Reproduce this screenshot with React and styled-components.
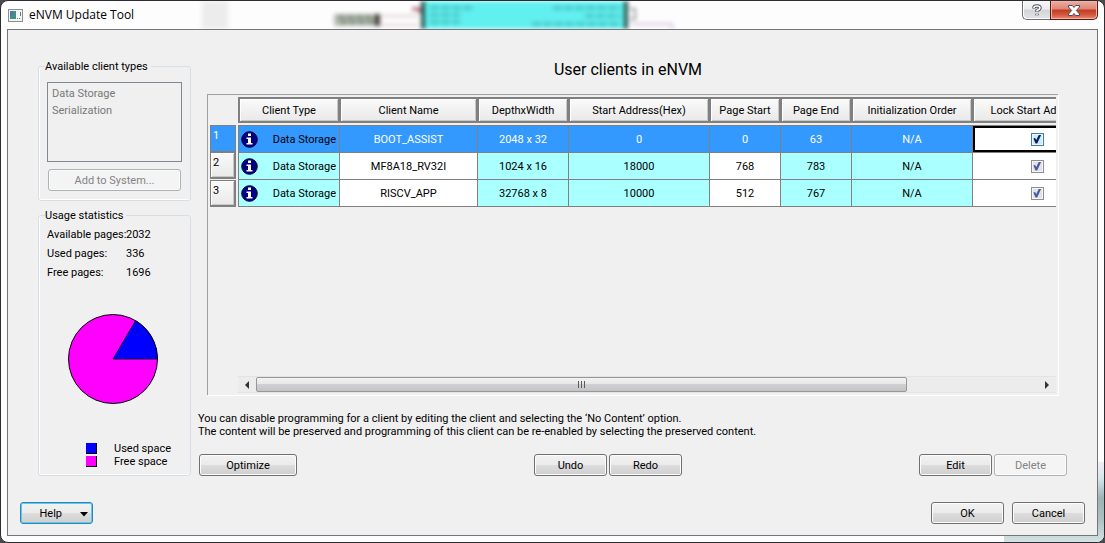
import React from "react";
import styled, { createGlobalStyle, css } from "styled-components";

const UI_FONT = 'Roboto, "Noto Sans", "Open Sans", sans-serif';
const CAPTION_FONT = '"Open Sans", "Noto Sans", sans-serif';

const GlobalStyle = createGlobalStyle`
  *, *::before, *::after { box-sizing: border-box; }
  body { margin: 0; background: #4a4a4e; font: 11px/14px ${UI_FONT}; color: #000; }
  button, input { font: inherit; color: inherit; }
`;

const Window = styled.div`
  position: relative;
  display: flex;
  flex-direction: column;
  min-height: 100vh;
  padding: 0 6px 6px;
  border: 1px solid #2c2c31;
  border-radius: 8px;
  background: #fdfdfe;
  overflow: hidden;
`;

const Backdrop = styled.svg`
  position: absolute;
  top: 0;
  left: -1px;
  filter: blur(2px);
`;

const Smudge = styled.div`
  position: absolute;
  right: 0;
  bottom: 0;
  width: 100px;
  height: 80px;
  border-radius: 0 0 7px 0;
  background: linear-gradient(#f3edf3, #d5e8ec 20%, #9db4b3 45%, #a9c0bf 70%, #d3e3e4);
`;

const TitleBar = styled.header`
  position: relative;
  display: flex;
  align-items: center;
  gap: 6px;
  height: 28px;
  padding-left: 1px;
`;

const Title = styled.h1`
  flex: 1;
  margin: 0;
  font: 400 12px/16px ${CAPTION_FONT};
`;

const CaptionButtons = styled.div`
  display: flex;
  align-self: flex-start;
  height: 19px;
`;

const CaptionButton = styled.button`
  display: flex;
  align-items: center;
  justify-content: center;
  width: 28px;
  padding: 0;
  border: 1px solid #6d6d74;
  border-top: 0;
  border-right: 0;
  border-radius: 0 0 0 5px;
  background: linear-gradient(#f8f8f9, #ececee 45%, #d3d4d8 50%, #e4e4e8);
  box-shadow: inset 1px -1px #fff;
  ${(p) => p.$close && css`
    width: 48px;
    border: 1px solid #5c1712;
    border-top: 0;
    border-radius: 0 0 5px 0;
    background: linear-gradient(#ecaea2, #dd8674 45%, #c3391f 50%, #d0563c 75%, #e58b70);
    box-shadow: inset 0 0 0 1px #f0b4a4;
  `}
`;

const Client = styled.main`
  position: relative;
  flex: 1;
  display: flex;
  flex-direction: column;
  border: 1px solid #75757a;
  background: #f0f0f0;
`;

const Content = styled.div`
  flex: 1;
  display: grid;
  grid-template-columns: 153px minmax(0, 1fr);
  gap: 8px;
  padding: 29px 30px 0;
`;

const Sidebar = styled.aside`
  display: flex;
  flex-direction: column;
  gap: 7px;
`;

const Group = styled.fieldset`
  display: flex;
  flex-direction: column;
  flex: ${(p) => (p.$grow ? "1" : "none")};
  min-width: 0;
  margin: 0;
  padding: ${(p) => (p.$grow ? "3px 8px 7px" : "9px 8px 9px")};
  border: 1px solid #d5dfe5;
  border-radius: 3px;
  box-shadow: inset 1px 0 #fff, inset 0 -1px #fff;
`;

const GroupTitle = styled.legend`
  margin: 0 -2px;
  padding: 2px 3px 0 0;
  line-height: 12px;
`;

const ClientTypes = styled.ul`
  height: 80px;
  margin: 0 0 7px;
  padding: 2px 4px;
  border: 1px solid #828790;
  list-style: none;
  color: #787878;
  line-height: 17px;
`;

const Button = styled.button`
  display: flex;
  align-items: center;
  justify-content: center;
  width: ${(p) => (p.$wide ? "98px" : "73px")};
  height: 22px;
  padding: 2px 0 0;
  border: 1px solid #707070;
  border-radius: 3px;
  background: linear-gradient(#f2f2f2, #ebebeb 49%, #dddddd 50%, #cfcfcf);
  box-shadow: inset 0 0 0 1px #fcfcfc;
  &:disabled {
    border-color: #adb2b5;
    background: #f4f4f4;
    color: #838383;
  }
`;

const AddButton = styled(Button)`
  width: auto;
  margin: 0 1px;
`;

const HelpButton = styled(Button)`
  justify-content: flex-end;
  gap: 18px;
  padding-right: 4px;
  border-color: #3c7fb1;
  box-shadow: inset 0 0 0 1px #4fd0f5;
`;

const Stats = styled.dl`
  display: grid;
  grid-template-columns: 79px 1fr;
  margin: 0;
  line-height: 19px;
  white-space: nowrap;
  dt, dd { margin: 0; }
`;

const Pie = styled.svg`
  display: block;
  margin: 31px auto 0 20px;
`;

const Legend = styled.ul`
  margin: auto 0 0;
  padding: 0 0 0 39px;
  list-style: none;
  line-height: 13px;
`;

const LegendItem = styled.li`
  display: flex;
  align-items: center;
  gap: 17px;
  &::before {
    content: "";
    width: 11px;
    height: 11px;
    border: solid #000;
    border-width: 0 1px 1px 0;
    background: ${(p) => p.$color};
  }
`;

const Panel = styled.section`
  display: flex;
  flex-direction: column;
`;

const Heading = styled.h2`
  margin: 0 10px 15px 0;
  padding-top: 2px;
  font-size: 16px;
  font-weight: 400;
  line-height: 18px;
  text-align: center;
`;

const Frame = styled.div`
  flex: 1;
  display: flex;
  flex-direction: column;
  justify-content: space-between;
  margin: 0 9px 0 8px;
  padding: 2px 2px 2px 2px;
  border: solid #a0a0a0;
  border-width: 1px 0 0 1px;
  box-shadow: 1px 1px #fff;
`;

const Viewport = styled.div`
  overflow: hidden;
`;

const Table = styled.table`
  width: 891px;
  table-layout: fixed;
  border-collapse: separate;
  border-spacing: 0;
  th, td { font-weight: 400; text-align: center; }
`;

const HeadCell = styled.th`
  padding: 0 0 2px;
`;

const raised = css`
  border: 1px solid #808080;
  border-right-width: 2px;
  border-bottom-width: 2px;
  background: linear-gradient(#fafafa, #e9e9e9);
  box-shadow: inset 1px 1px #fff, inset -1px -1px #c8c8c8;
`;

const HeadLabel = styled.div`
  height: 26px;
  line-height: 23px;
  white-space: nowrap;
  ${raised}
  border-width: 2px 1px 2px 2px;
`;

const RowHead = styled.th`
  padding: 0 2px 0 0;
  height: 27px;
`;

const RowLabel = styled.div`
  height: 27px;
  padding: 2px;
  line-height: 16px;
  text-align: left;
  ${raised}
  ${(p) => p.$selected && css`
    border: 1px solid #808080;
    background: #3399ff;
    box-shadow: none;
    color: #fff;
  `}
`;

const Cell = styled.td`
  height: 27px;
  padding: 2px 0 0;
  border: solid #808080;
  border-width: 1px 0 0 1px;
  background: ${(p) => (p.$selected ? "#3399ff" : p.$locked ? "#aaffff" : "#fff")};
  color: ${(p) => (p.$selected ? "#fff" : "#000")};
  tr:last-child > & { height: 28px; border-bottom-width: 1px; }
  ${(p) => p.$graphic && css`
    padding: 0;
  `}
  ${(p) => p.$focused && css`
    background: #fff;
    box-shadow: inset 0 0 0 2px #000;
  `}
`;

const TypeCell = styled.div`
  display: flex;
  align-items: center;
  justify-content: space-between;
  padding: 0 3px 0 2px;
  line-height: 16px;
  color: #000;
  span { padding-top: 1px; }
`;

const CheckBox = styled.input`
  appearance: none;
  display: block;
  width: 13px;
  height: 13px;
  margin: 0 auto;
  border: 1px solid ${(p) => (p.$hot ? "#3c7fb1" : "#8e8f8f")};
  background: ${(p) => (p.$hot ? "#c9ecfb" : "#dfe2e8")};
  box-shadow: inset 0 0 0 1px #f6f6f6;
  &:checked::before {
    content: "";
    display: block;
    width: 9px;
    height: 9px;
    margin: 1px;
    background: ${(p) => (p.$hot ? "#0a1a6a" : "#4a5aa0")};
    clip-path: polygon(10% 45%, 28% 40%, 42% 62%, 72% 0, 98% 0, 52% 100%, 34% 100%);
  }
`;

const ScrollBar = styled.div`
  display: flex;
  align-items: center;
  height: 17px;
  margin-left: 28px;
  border: solid #e3e3e3;
  border-width: 1px 0;
  background: #ececec;
`;

const Arrow = styled.button`
  display: flex;
  align-items: center;
  justify-content: center;
  width: 18px;
  padding: 0;
  border: 0;
  background: none;
`;

const Track = styled.div`
  flex: 1;
`;

const Thumb = styled.div`
  display: flex;
  align-items: center;
  justify-content: center;
  width: 83.3%;
  height: 15px;
  border: 1px solid #979797;
  border-radius: 2px;
  background: linear-gradient(#f3f3f3, #e6e6e6 49%, #d0d0d2 50%, #c4c4c6);
`;

const Hint = styled.p`
  margin: 17px 0 16px -1px;
  line-height: 13px;
`;

const Actions = styled.div`
  display: flex;
  justify-content: space-between;
`;

const ButtonPair = styled.div`
  display: flex;
  gap: ${(p) => (p.$spread ? "8px" : "2px")};
`;

const Footer = styled.footer`
  display: flex;
  justify-content: space-between;
  padding: 26px 12px 11px;
`;

const columns = [
  ["Client Type", 101],
  ["Client Name", 138],
  ["DepthxWidth", 91],
  ["Start Address(Hex)", 141],
  ["Page Start", 71],
  ["Page End", 71],
  ["Initialization Order", 121],
  ["Lock Start Address", 129],
];

const clients = [
  { name: "BOOT_ASSIST", size: "2048 x 32", address: "0", start: "0", end: "63", selected: true },
  { name: "MF8A18_RV32I", size: "1024 x 16", address: "18000", start: "768", end: "783" },
  { name: "RISCV_APP", size: "32768 x 8", address: "10000", start: "512", end: "767" },
];

const InfoIcon = () => (
  <svg width="17" height="17" viewBox="0 0 17 17" aria-hidden="true">
    <circle cx="8.5" cy="8.5" r="7.8" fill="#000080" stroke="#00003c" />
    <path d="M7 2.5h3v2.6H7zM5.5 6.4H10v5.6h1.5v1.6h-6V12H7V8H5.5z" fill="#fff" />
  </svg>
);

const ArrowIcon = ({ d }) => (
  <svg width="6" height="8" viewBox="0 0 6 8" aria-hidden="true">
    <path d={d} fill="#333" />
  </svg>
);

export default function App() {
  return (
    <>
      <GlobalStyle />
      <Window>
        <Backdrop width="760" height="28" aria-hidden="true">
          <rect x="202" y="0" width="26" height="28" fill="#ececec" />
          <rect x="334" y="13" width="46" height="12" fill="#b4bcb0" />
          <path d="M338 16h38M340 21h36" stroke="#7d877a" strokeWidth="3" strokeDasharray="7 2" />
          <rect x="375" y="13" width="5" height="12" fill="#453e3a" />
          <path d="M381 15h37M381 24h37" stroke="#ddd0cc" strokeWidth="2" />
          <path d="M412 8h8v4" stroke="#b06070" strokeWidth="3" fill="none" />
          <rect x="423" y="-6" width="204" height="44" fill="#62efef" />
          <path d="M423 0v34M626 0v34" stroke="#20514a" strokeWidth="4" />
          <path d="M430 7h42M430 14h30M430 21h30M553 7h68M585 15h36M532 23h89" stroke="#4cc8c8" strokeWidth="4" strokeDasharray="9 2" />
          <path d="M630 8h5v10h-5" stroke="#999" strokeWidth="2" fill="none" />
          <path d="M632 23h40v8" stroke="#d9bfd9" strokeWidth="2" fill="none" />
        </Backdrop>
        <Smudge />
        <TitleBar>
          <svg width="15" height="13" viewBox="0 0 15 13" aria-hidden="true">
            <rect x=".5" y=".5" width="14" height="12" fill="#f4f4f4" stroke="#8a8d92" />
            <rect x="2" y="2" width="6" height="8" fill="#3f8f86" />
            <rect x="2" y="2" width="3" height="5" fill="#4c78a8" />
            <path d="M9 9.5h1M11 9.5h1M12.5 3v4" stroke="#5a7f70" />
          </svg>
          <Title>eNVM Update Tool</Title>
          <CaptionButtons>
            <CaptionButton aria-label="Help">
              <svg width="10" height="13" viewBox="0 0 10 13" aria-hidden="true">
                <path d="M2 4.500V3.500Q2 2 5 2t3 2Q8 5.200 5 6.500V8M5 9.800v1.500" fill="none" stroke="#50525f" strokeWidth="3.400" />
                <path d="M2 4V3.500Q2 2 5 2t3 2Q8 5.200 5 6.500V7.600M5 10v1" fill="none" stroke="#fff" strokeWidth="1.600" />
              </svg>
            </CaptionButton>
            <CaptionButton $close aria-label="Close">
              <svg width="12" height="11" viewBox="0 0 12 11" aria-hidden="true">
                <path d="M.5.5h3.800L6 2.500 7.700.5h3.800v1.500L8.300 5.500l3.200 3.500v1.500H7.700L6 8.500 4.300 10.500H.5V9l3.200-3.500L.5 2z" fill="#fff" stroke="#4a4c5a" />
              </svg>
            </CaptionButton>
          </CaptionButtons>
        </TitleBar>

        <Client>
          <Content>
            <Sidebar>
              <Group>
                <GroupTitle>Available client types</GroupTitle>
                <ClientTypes>
                  <li>Data Storage</li>
                  <li>Serialization</li>
                </ClientTypes>
                <AddButton disabled>Add to System...</AddButton>
              </Group>
              <Group $grow>
                <GroupTitle>Usage statistics</GroupTitle>
                <Stats>
                  <dt>Available pages:</dt><dd>2032</dd>
                  <dt>Used pages:</dt><dd>336</dd>
                  <dt>Free pages:</dt><dd>1696</dd>
                </Stats>
                <Pie width="92" height="92" viewBox="-46 -46 92 92" role="img" aria-label="Used and free space">
                  <circle r="44.500" fill="#ff00ff" stroke="#000" />
                  <path d="M0 0H44.500A44.500 44.500 0 0 0 22.600-38.300Z" fill="#0000ff" stroke="#000" strokeWidth=".8" />
                </Pie>
                <Legend>
                  <LegendItem $color="#0000ff">Used space</LegendItem>
                  <LegendItem $color="#ff00ff">Free space</LegendItem>
                </Legend>
              </Group>
            </Sidebar>

            <Panel>
              <Heading>User clients in eNVM</Heading>
              <Frame>
                <Viewport>
                  <Table>
                    <colgroup>
                      <col style={{ width: 28 }} />
                      {columns.map(([label, width]) => <col key={label} style={{ width }} />)}
                    </colgroup>
                    <thead>
                      <tr>
                        <td />
                        {columns.map(([label]) => (
                          <HeadCell key={label} scope="col"><HeadLabel>{label}</HeadLabel></HeadCell>
                        ))}
                      </tr>
                    </thead>
                    <tbody>
                      {clients.map((c, i) => (
                        <tr key={c.name}>
                          <RowHead scope="row"><RowLabel $selected={c.selected}>{i + 1}</RowLabel></RowHead>
                          <Cell $graphic $locked $selected={c.selected}><TypeCell><InfoIcon /><span>Data Storage</span></TypeCell></Cell>
                          <Cell $selected={c.selected}>{c.name}</Cell>
                          <Cell $locked $selected={c.selected}>{c.size}</Cell>
                          <Cell $locked $selected={c.selected}>{c.address}</Cell>
                          <Cell $selected={c.selected}>{c.start}</Cell>
                          <Cell $locked $selected={c.selected}>{c.end}</Cell>
                          <Cell $locked $selected={c.selected}>N/A</Cell>
                          <Cell $graphic $focused={c.selected}>
                            <CheckBox type="checkbox" defaultChecked $hot={c.selected} aria-label={`Lock start address of ${c.name}`} />
                          </Cell>
                        </tr>
                      ))}
                    </tbody>
                  </Table>
                </Viewport>
                <ScrollBar>
                  <Arrow aria-label="Scroll left"><ArrowIcon d="M5 0v8L1 4z" /></Arrow>
                  <Track>
                    <Thumb>
                      <svg width="9" height="7" viewBox="0 0 9 7" aria-hidden="true">
                        <path d="M1.500 0v7M4.500 0v7M7.500 0v7" stroke="#5a5a5a" />
                      </svg>
                    </Thumb>
                  </Track>
                  <Arrow aria-label="Scroll right"><ArrowIcon d="M1 0v8l4-4z" /></Arrow>
                </ScrollBar>
              </Frame>
              <Hint>
                You can disable programming for a client by editing the client and selecting the ‘No Content’ option.
                <br />
                The content will be preserved and programming of this client can be re-enabled by selecting the preserved content.
              </Hint>
              <Actions>
                <Button $wide>Optimize</Button>
                <ButtonPair><Button>Undo</Button><Button>Redo</Button></ButtonPair>
                <ButtonPair><Button>Edit</Button><Button disabled>Delete</Button></ButtonPair>
              </Actions>
            </Panel>
          </Content>

          <Footer>
            <HelpButton>
              Help
              <svg width="8" height="5" viewBox="0 0 8 5" aria-hidden="true"><path d="M0 0h8L4 4.500z" /></svg>
            </HelpButton>
            <ButtonPair $spread><Button>OK</Button><Button>Cancel</Button></ButtonPair>
          </Footer>
        </Client>
      </Window>
    </>
  );
}
